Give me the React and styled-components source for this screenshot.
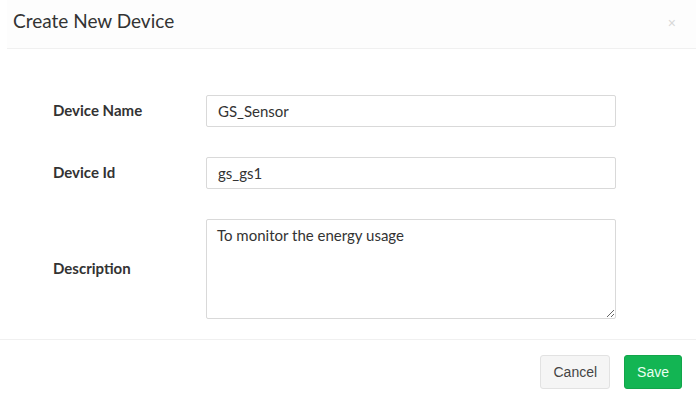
import React from 'react'
import styled, { createGlobalStyle } from 'styled-components'

const GlobalStyle = createGlobalStyle`
    html, body {
        margin: 0;
        padding: 0;
        background: #ffffff;
        font-family: 'Lato', 'Liberation Sans', sans-serif;
    }
`

const Modal = styled.div`
    width: 696px;
    height: 401px;
    display: flex;
    flex-direction: column;
    background: #ffffff;
`

const Header = styled.div`
    height: 48px;
    display: flex;
    align-items: center;
    justify-content: space-between;
    padding: 0 20px 0 6px;
    margin-left: 7px;
    background: #fdfdfd;
    border-bottom: 1px solid #f0f0f0;

    h1 {
        margin: 0;
        font-size: 19px;
        font-weight: 400;
        color: #333333;
        padding-bottom: 8px;
    }
`

const Close = styled.span`
    color: #d8d8d8;
    font-size: 14px;
    font-family: 'Liberation Sans', sans-serif;
    padding-bottom: 2px;
`

const Body = styled.div`
    flex: 1;
    padding: 46px 80px 0 53px;
    display: flex;
    flex-direction: column;
    gap: 30px;
`

const Row = styled.div`
    display: flex;
    align-items: center;
`

const Label = styled.label`
    width: 153px;
    font-size: 15px;
    font-weight: 700;
    color: #333333;
    padding-bottom: 2px;
`

const Input = styled.input`
    width: 410px;
    height: 32px;
    box-sizing: border-box;
    border: 1px solid #d9d9d9;
    border-radius: 2px;
    padding: 0 11px;
    font-family: 'Lato', sans-serif;
    font-size: 15px;
    color: #333333;
    outline: none;
`

const TextArea = styled.textarea`
    width: 410px;
    height: 100px;
    box-sizing: border-box;
    border: 1px solid #d9d9d9;
    border-radius: 2px;
    padding: 6px 10px;
    font-family: 'Lato', sans-serif;
    font-size: 15px;
    color: #333333;
    outline: none;
    resize: vertical;
    margin: 0;
`

const Footer = styled.div`
    height: 62px;
    border-top: 1px solid #f0f0f0;
    display: flex;
    align-items: center;
    justify-content: flex-end;
    gap: 14px;
    padding: 2px 14px 0 0;
    box-sizing: border-box;
`

const Button = styled.button`
    height: 34px;
    padding: 0 12px;
    font-family: 'Liberation Sans', Arial, sans-serif;
    font-size: 14px;
    border-radius: 3px;
    border: 1px solid ${({ $primary }) => ($primary ? '#12a54a' : '#e2e2e2')};
    background: ${({ $primary }) => ($primary ? '#13b553' : '#f5f5f5')};
    color: ${({ $primary }) => ($primary ? '#e8fff0' : '#444444')};
`

const App = () => {
    return (
        <>
            <GlobalStyle />
            <Modal>
                <Header>
                    <h1>Create New Device</h1>
                    <Close>×</Close>
                </Header>
                <Body>
                    <Row>
                        <Label>Device Name</Label>
                        <Input defaultValue="GS_Sensor" />
                    </Row>
                    <Row>
                        <Label>Device Id</Label>
                        <Input defaultValue="gs_gs1" />
                    </Row>
                    <Row>
                        <Label>Description</Label>
                        <TextArea defaultValue="To monitor the energy usage" />
                    </Row>
                </Body>
                <Footer>
                    <Button>Cancel</Button>
                    <Button $primary>Save</Button>
                </Footer>
            </Modal>
        </>
    )
}

export default App
